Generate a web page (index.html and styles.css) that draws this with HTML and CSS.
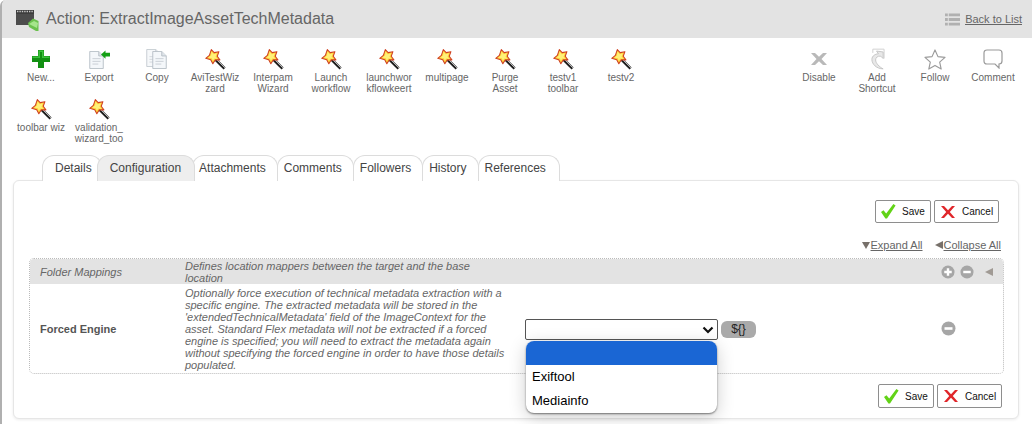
FILE: index.html
```html
<!DOCTYPE html>
<html lang="en">
<head>
<meta charset="utf-8">
<title>Action: ExtractImageAssetTechMetadata</title>
<link rel="stylesheet" href="styles.css">
</head>
<body>
<svg class="defs" width="0" height="0" aria-hidden="true">
  <defs>
    <symbol id="wand" viewBox="0 0 22 22">
      <path d="M11 11 L20.5 20.5" stroke="#1c1c1c" stroke-width="3"/>
      <path d="M11.5 10.5 L20.8 19.8" stroke="#c8c8c8" stroke-width="1"/>
      <path d="M6.6 .6 L9.6 3.8 L14.6 2.8 L12.8 7.6 L15.6 11.4 L10.8 11.4 L8.2 15.4 L6 11.2 L.8 9.8 L4.6 6.6 Z" fill="#ffd53a" stroke="#cf3f22" stroke-width="1.1" stroke-linejoin="round"/>
      <path d="M6.8 3 L9 5.4 L12.4 4.8 L11 8 L13 10.2 L9.8 10 L8.2 12.4 L7.2 9.6 L3.4 8.8 L6.4 6.8 Z" fill="#fff17a"/>
    </symbol>
    <symbol id="check" viewBox="0 0 15 15">
      <path d="M0 8 L2.5 6.2 L5.2 9.4 L12.4 0 L14.6 1.4 L6 14.4 L4.4 14.4 Z" fill="#62d317"/>
    </symbol>
    <symbol id="cross" viewBox="0 0 14 12">
      <path d="M0 0 H3 L7 4.2 L11 0 H14 L8.8 6 L14 12 H11 L7 7.8 L3 12 H0 L5.2 6 Z" fill="#e0262a"/>
    </symbol>
    <symbol id="plus" viewBox="0 0 15 15">
      <circle cx="7.5" cy="7.5" r="7" fill="#a6a6a6"/>
      <path d="M3.5 6.2 H6.2 V3.5 H8.8 V6.2 H11.5 V8.8 H8.8 V11.5 H6.2 V8.8 H3.5 Z" fill="#fff"/>
    </symbol>
    <symbol id="minus" viewBox="0 0 15 15">
      <circle cx="7.5" cy="7.5" r="7" fill="#a6a6a6"/>
      <rect x="3.5" y="6.2" width="8" height="2.6" fill="#fff"/>
    </symbol>
    <symbol id="doc" viewBox="0 0 16 20">
      <path d="M.5 .5 H10.5 L15.5 5.5 V19.5 H.5 Z" fill="#f4f7fa" stroke="#b4bcc4"/>
      <path d="M10.5 .5 V5.5 H15.5" fill="#dfe5ea" stroke="#b4bcc4"/>
      <path d="M3.5 8.5 H12.5 M3.5 11.5 H12.5 M3.5 14.5 H10" stroke="#c6ccd2"/>
    </symbol>
  </defs>
</svg>

<div class="page">
  <header class="titlebar">
    <svg class="title-icon" width="23" height="22" viewBox="0 0 23 22">
      <rect x="0" y="0" width="18" height="15" fill="#3e3e3e"/>
      <path d="M1 1.5 H17" stroke="#c8c8c8" stroke-width="1.4" stroke-dasharray="1.4 1"/>
      <rect x="0" y="4" width="18" height="11" fill="#4c4c4c"/>
      <path d="M12 13 L17 8.5 L22.5 11 L22.5 21 L20 21 L13 17 Z" fill="#6bc14e"/>
      <path d="M13 14 L18 11 L22 13 L21 18 Z" fill="#a6e58c"/>
    </svg>
    <h1 class="title">Action: ExtractImageAssetTechMetadata</h1>
    <a class="back" href="#">
      <svg width="15" height="13" viewBox="0 0 16 13"><path d="M0 0H3V3H0ZM4 0H16V3H4ZM0 5H3V8H0ZM4 5H16V8H4ZM0 10H3V13H0ZM4 10H16V13H4Z" fill="#b0b0b0"/></svg>
      <span class="back-text">Back to List</span>
    </a>
  </header>

  <section class="toolbar">
    <div class="tools">
      <div class="tool"><span class="ico"><svg width="18" height="18" viewBox="0 0 18 18"><path d="M6 0H12V6H18V12H12V18H6V12H0V6H6Z" fill="#129012"/><path d="M6.5 .5H11.5V6.5H17.5V8H10V2H8V8H.5V6.5H6.5Z" fill="#3cc03c"/></svg></span><span class="lbl">New...</span></div>
      <div class="tool"><span class="ico"><span class="stack"><svg width="15" height="18"><use href="#doc"/></svg><svg class="arrow" width="9" height="9" viewBox="0 0 12 11"><path d="M0 5.5 L6 0 V3 H12 V8 H6 V11 Z" fill="#14a014"/></svg></span></span><span class="lbl">Export</span></div>
      <div class="tool"><span class="ico"><span class="stack copy"><svg class="back-doc" width="15" height="18"><use href="#doc"/></svg><svg class="front-doc" width="15" height="18"><use href="#doc"/></svg></span></span><span class="lbl">Copy</span></div>
      <div class="tool"><span class="ico"><svg width="21" height="21"><use href="#wand"/></svg></span><span class="lbl">AviTestWiz<br>zard</span></div>
      <div class="tool"><span class="ico"><svg width="21" height="21"><use href="#wand"/></svg></span><span class="lbl">Interpam<br>Wizard</span></div>
      <div class="tool"><span class="ico"><svg width="21" height="21"><use href="#wand"/></svg></span><span class="lbl">Launch<br>workflow</span></div>
      <div class="tool"><span class="ico"><svg width="21" height="21"><use href="#wand"/></svg></span><span class="lbl">launchwor<br>kflowkeert</span></div>
      <div class="tool"><span class="ico"><svg width="21" height="21"><use href="#wand"/></svg></span><span class="lbl">multipage</span></div>
      <div class="tool"><span class="ico"><svg width="21" height="21"><use href="#wand"/></svg></span><span class="lbl">Purge<br>Asset</span></div>
      <div class="tool"><span class="ico"><svg width="21" height="21"><use href="#wand"/></svg></span><span class="lbl">testv1<br>toolbar</span></div>
      <div class="tool"><span class="ico"><svg width="21" height="21"><use href="#wand"/></svg></span><span class="lbl">testv2</span></div>
      <div class="tool"><span class="ico"><svg width="21" height="21"><use href="#wand"/></svg></span><span class="lbl">toolbar wiz</span></div>
      <div class="tool"><span class="ico"><svg width="21" height="21"><use href="#wand"/></svg></span><span class="lbl">validation_<br>wizard_too</span></div>
    </div>
    <div class="tools tools-right">
      <div class="tool"><span class="ico"><svg width="16" height="12" viewBox="0 0 16 14" preserveAspectRatio="none"><path d="M0 0H4L8 4.5L12 0H16L10.5 7L16 14H12L8 9.5L4 14H0L5.5 7Z" fill="#b9b9b9"/></svg></span><span class="lbl">Disable</span></div>
      <div class="tool"><span class="ico"><svg width="15" height="22" viewBox="0 0 16 23"><path d="M3 1H15V11M3 1L3 5" fill="none" stroke="#cfcfcf" stroke-width="1"/><path d="M14 22 C7 22 2 17 2 12 C2 8 6 6 9 6 L7 3 L14 4 L14 11 L11.5 8.5 C8 8 6 10 6 12.5 C6 16 10 20 14 22 Z" fill="#e8e8e8" stroke="#c4c4c4"/></svg></span><span class="lbl">Add<br>Shortcut</span></div>
      <div class="tool"><span class="ico"><svg width="22" height="21" viewBox="0 0 23 22"><path d="M11.5 1 L14.6 8 L22 8.8 L16.4 13.8 L18 21 L11.5 17.2 L5 21 L6.6 13.8 L1 8.8 L8.4 8 Z" fill="#fff" stroke="#9a9a9a" stroke-width="1.2" stroke-linejoin="round"/></svg></span><span class="lbl">Follow</span></div>
      <div class="tool"><span class="ico"><svg width="20" height="20" viewBox="0 0 20 20"><path d="M4 1 H16 Q19 1 19 4 V12 Q19 15 16 15 V19 L12 15 H4 Q1 15 1 12 V4 Q1 1 4 1 Z" fill="#fff" stroke="#9a9a9a" stroke-width="1.2"/></svg></span><span class="lbl">Comment</span></div>
    </div>
  </section>

  <nav class="tabs">
    <a class="tab tab-first">Details</a>
    <a class="tab tab-active">Configuration</a>
    <a class="tab">Attachments</a>
    <a class="tab">Comments</a>
    <a class="tab">Followers</a>
    <a class="tab">History</a>
    <a class="tab tab-last">References</a>
  </nav>

  <main class="panel">
    <div class="actions actions-top">
      <button class="btn btn-save"><svg width="15" height="15"><use href="#check"/></svg>Save</button>
      <button class="btn btn-cancel"><svg width="14" height="12"><use href="#cross"/></svg>Cancel</button>
    </div>
    <div class="expanders">
      <span class="tri tri-down"></span><a href="#">Expand All</a>
      <span class="tri tri-left tri-gap"></span><a href="#">Collapse All</a>
    </div>
    <div class="grid">
      <div class="row row-head">
        <div class="name name-group">Folder Mappings</div>
        <div class="desc">Defines location mappers between the target and the base location</div>
        <div class="value"></div>
        <div class="ctl">
          <svg width="14" height="14"><use href="#plus"/></svg>
          <svg width="14" height="14"><use href="#minus"/></svg>
          <span class="tri tri-left tri-ctl"></span>
        </div>
      </div>
      <div class="row row-body">
        <div class="name name-field">Forced Engine</div>
        <div class="desc">Optionally force execution of technical metadata extraction with a specific engine. The extracted metadata will be stored in the 'extendedTechnicalMetadata' field of the ImageContext for the asset. Standard Flex metadata will not be extracted if a forced engine is specified; you will need to extract the metadata again without specifying the forced engine in order to have those details populated.</div>
        <div class="value value-field">
          <div class="picker">
            <div class="select">
              <svg width="12" height="8" viewBox="0 0 12 8"><path d="M1.5 1.5 L6 6 L10.5 1.5" fill="none" stroke="#111" stroke-width="2.2"/></svg>
            </div>
            <ul class="popup">
              <li class="opt opt-selected">&nbsp;</li>
              <li class="opt">Exiftool</li>
              <li class="opt">Mediainfo</li>
            </ul>
          </div>
          <span class="expr">${}</span>
        </div>
        <div class="ctl">
          <svg width="15" height="15"><use href="#minus"/></svg>
        </div>
      </div>
    </div>
    <div class="actions actions-bottom">
      <button class="btn btn-save"><svg width="15" height="15"><use href="#check"/></svg>Save</button>
      <button class="btn btn-cancel"><svg width="14" height="12"><use href="#cross"/></svg>Cancel</button>
    </div>
  </main>
</div>
</body>
</html>
```

FILE: styles.css
```css
* { box-sizing: border-box; }
html, body { margin: 0; padding: 0; height: 424px; overflow: hidden; background: #fff; }
body { font-family: "Liberation Sans", Arial, sans-serif; color: #555; }
.defs { position: absolute; }
a { color: inherit; }

.page { border-left: 2px solid #b0b0b0; height: 424px; border-top-left-radius: 6px; }

.titlebar {
  display: flex; align-items: center; height: 38px; background: #e3e3e3;
  padding: 0 10px 0 14px; border-top-left-radius: 5px;
}
.title-icon { margin-top: 3px; flex: none; }
.title { margin: 0 0 0 7px; font-size: 16px; font-weight: 400; color: #666; flex: 1; }
.back { display: flex; align-items: center; gap: 5px; font-size: 11px; color: #666; }
.back-text { text-decoration: underline; }

.toolbar { display: flex; justify-content: space-between; padding: 8px 10px 0 10px; height: 117px; }
.tools { display: flex; flex-wrap: wrap; align-content: flex-start; width: 640px; }
.tools-right { width: 232px; }
.tool { width: 58px; height: 50px; display: flex; flex-direction: column; align-items: center; }
.ico { height: 26px; width: 100%; display: flex; align-items: center; justify-content: center; flex: none; }
.lbl { font-size: 10px; line-height: 11px; text-align: center; color: #666; white-space: nowrap; }

.stack { display: block; position: relative; width: 22px; height: 22px; }
.stack svg { position: absolute; left: 1px; top: 3px; }
.stack .arrow { left: 13px; top: 2px; }
.copy .back-doc { left: 0; top: 1px; opacity: .8; }
.copy .front-doc { left: 6px; top: 3px; }

.tabs { display: flex; height: 26px; margin-left: 40px; position: relative; z-index: 1; margin-bottom: -1px; }
.tab {
  display: block; height: 26px; padding: 5px 11px 0 6px; font-size: 12px; line-height: 15px; color: #444;
  border: 1px solid #dcdcdc; border-bottom: 0; border-radius: 12px 12px 0 0; background: #fff; margin-right: -1px;
}
.tab-first { padding-left: 12px; padding-right: 9px; }
.tab-last { padding-right: 13px; }
.tab-active { background: #eee; padding: 5px 13px 0 12px; margin-left: -4px; margin-right: -3px; position: relative; z-index: 1; }

.panel {
  margin: 0 13px 0 11px; height: 239px; padding: 19px 15px 0 15px; background: #fff;
  border: 1px solid #e6e6e6; border-radius: 6px; box-shadow: 0 1px 3px rgba(0,0,0,.08);
}
.actions { display: flex; justify-content: flex-end; gap: 3px; }
.actions-top { padding-right: 4px; height: 23px; }
.actions-bottom { padding-right: 1px; margin-top: 10px; height: 24px; }
.btn {
  display: flex; align-items: center; height: 100%; padding: 0 6px; background: #fff; border: 1px solid #8e8e8e;
  border-radius: 2px; font: 10px "Liberation Sans", Arial, sans-serif; color: #111;
}
.btn-save { width: 56px; padding-left: 5px; }
.btn-save svg { margin-right: 6px; flex: none; }
.btn-cancel { width: 65px; padding-left: 6px; }
.btn-cancel svg { margin-right: 7px; flex: none; }

.expanders {
  display: flex; justify-content: flex-end; align-items: center; gap: 1px; height: 14px; margin-top: 15px;
  padding-right: 2px; font-size: 11px; color: #666;
}
.expanders a { text-decoration: underline; }
.tri { display: inline-block; width: 0; height: 0; border-style: solid; border-color: transparent; }
.tri-down { border-width: 7px 4px 0 4px; border-top-color: #77706a; }
.tri-left { border-width: 4px 8px 4px 0; border-right-color: #77706a; }
.tri-gap { margin-left: 11px; }
.tri-ctl { border-right-color: #a09a94; margin-left: 6px; }

.grid { margin-top: 6px; border: 1px dotted #bbb; border-radius: 5px; width: 975px; }
.row { display: grid; grid-template-columns: 155px 340px 416px 1fr; align-items: center; }
.row-head { height: 25px; background: #e3e3e3; border-radius: 4px 4px 0 0; }
.row-body { height: 89px; }
.name { padding-left: 10px; font-size: 11px; color: #666; }
.name-group { font-style: italic; }
.name-field { font-weight: 700; color: #555; }
.desc { font-size: 11px; line-height: 12px; font-style: italic; color: #666; width: 320px; }
.ctl { display: flex; align-items: center; gap: 5px; }

.value { display: flex; align-items: center; gap: 3px; }
.value-field { padding-top: 2px; }
.picker { position: relative; width: 193px; }
.select {
  display: flex; align-items: center; justify-content: flex-end; height: 21px; padding-right: 3px;
  background: #fff; border: 1px solid #555; border-radius: 2px;
}
.popup {
  position: absolute; left: 1px; top: 22px; width: 191px; margin: 0; padding: 0; list-style: none; background: #fff;
  border-radius: 8px; overflow: hidden; box-shadow: 0 1px 2px rgba(0,0,0,.5), 0 4px 18px rgba(0,0,0,.2); z-index: 2;
}
.opt { height: 24px; line-height: 24px; padding-left: 6px; font-size: 13px; color: #000; }
.opt-selected { background: #1a66d4; }
.expr {
  display: block; width: 35px; height: 17px; line-height: 16px; text-align: center; background: #aaa;
  border-radius: 6px; font-size: 12px; color: #222;
}
```
